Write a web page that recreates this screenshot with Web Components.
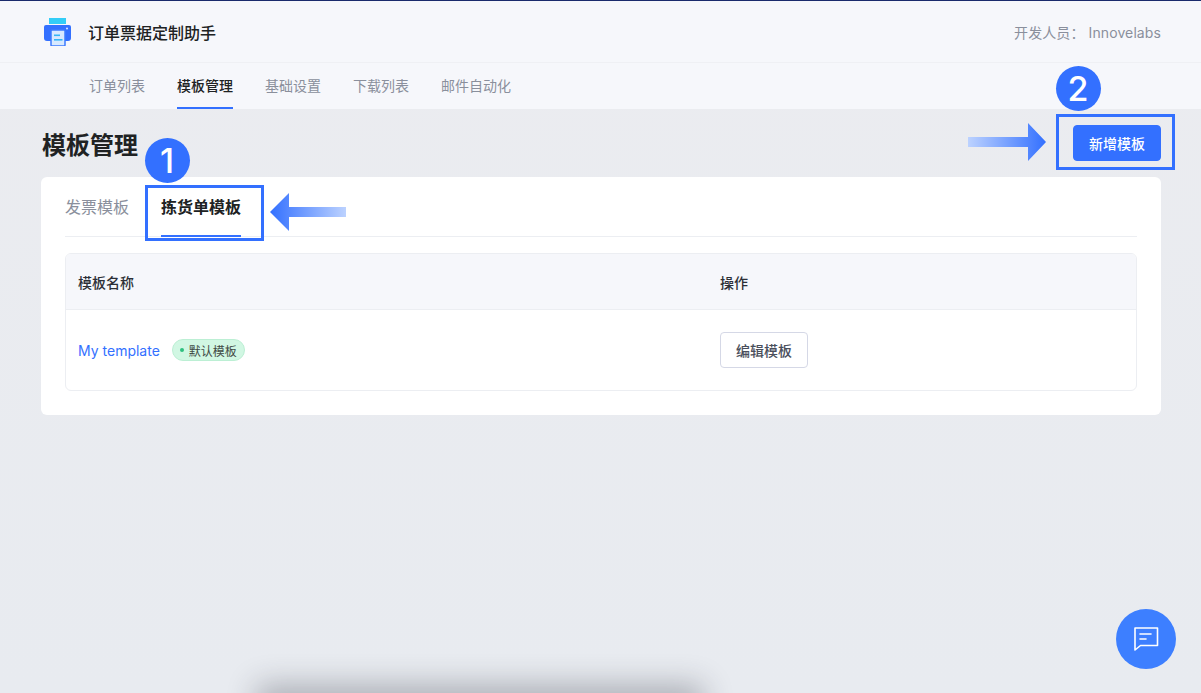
<!DOCTYPE html>
<html lang="zh">
<head>
<meta charset="utf-8">
<title>模板管理</title>
<style>
  html, body { margin: 0; height: 100%; }
  body {
    position: relative;
    overflow: hidden;
    height: 693px;
    background: linear-gradient(#ebecf0, #e8ebf0);
    font-family: Inter, "Noto Sans CJK SC", sans-serif;
    color: #202223;
  }
</style>
</head>
<body>
<app-shell></app-shell>
<call-out num="1" cx="167" cy="160" bx="145" by="185" dir="left" ax="270" ay="193"></call-out>
<call-out num="2" cx="1078" cy="88" bx="1056" by="114" dir="right" ax="968" ay="123"></call-out>
<chat-fab></chat-fab>

<script>
const FONT = 'Inter, "Noto Sans CJK SC", sans-serif';

customElements.define('app-header', class extends HTMLElement {
  constructor() {
    super();
    const root = this.attachShadow({ mode: 'open' });
    root.innerHTML = `
    <style>
      :host {
        display: flex;
        align-items: center;
        justify-content: space-between;
        height: 61px;
        padding: 0 40px 0 44px;
        background: #f6f7fb;
        border-bottom: 1px solid #eff0f4;
      }
      .brand { display: flex; align-items: center; gap: 17px; }
      svg { display: block; width: 27px; height: 28px; }
      h1 { margin: 0; font-size: 16px; font-weight: 500; color: #202223; }
      .dev { font-size: 14px; color: #8a8f9c; letter-spacing: .1px; }
    </style>
    <div class="brand">
      <svg viewBox="0 0 27 28">
        <rect x="5" y="0" width="17" height="6" fill="#33cdf7"/>
        <path d="M2 7h23a2 2 0 0 1 2 2v11a3 3 0 0 1-3 3H3a3 3 0 0 1-3-3V9a2 2 0 0 1 2-2z" fill="#3370ff"/>
        <rect x="7" y="12" width="14" height="16" rx="1" fill="#d7e9ff" stroke="#3d7bff" stroke-width="1.5"/>
        <rect x="10" y="16.5" width="6" height="1.6" fill="#33b5f7"/>
        <rect x="10" y="21" width="8.5" height="1.6" fill="#33b5f7"/>
        <circle cx="23" cy="10.500" r="1" fill="#dce8ff"/>
      </svg>
      <h1>订单票据定制助手</h1>
    </div>
    <div class="dev">开发人员： Innovelabs</div>
    `;
  }
});

customElements.define('app-nav', class extends HTMLElement {
  constructor() {
    super();
    const root = this.attachShadow({ mode: 'open' });
    root.innerHTML = `
    <style>
      :host {
        display: flex;
        gap: 32px;
        height: 46px;
        padding-left: 89px;
        background: #f6f7fb;
      }
      a {
        display: block;
        box-sizing: border-box;
        height: 46px;
        line-height: 46px;
        font-size: 14px;
        color: #8a8f9c;
      }
      a.on { color: #202223; font-weight: 500; border-bottom: 2px solid #3370ff; }
    </style>
    <a>订单列表</a><a class="on">模板管理</a><a>基础设置</a><a>下载列表</a><a>邮件自动化</a>
    `;
  }
});

customElements.define('ui-button', class extends HTMLElement {
  constructor() {
    super();
    const root = this.attachShadow({ mode: 'open' });
    root.innerHTML = `
    <style>
      :host { display: inline-block; }
      button {
        display: block;
        width: 88px;
        height: 36px;
        padding: 0;
        border: 1px solid #d5d8e6;
        border-radius: 4px;
        background: #fff;
        color: #4a4f5c;
        font: 500 14px ${FONT};
      }
      :host([primary]) button { background: #3370ff; border-color: #3370ff; color: #fff; }
    </style>
    <button><slot></slot></button>
    `;
  }
});

customElements.define('status-badge', class extends HTMLElement {
  constructor() {
    super();
    const root = this.attachShadow({ mode: 'open' });
    root.innerHTML = `
    <style>
      :host {
        display: inline-flex;
        align-items: center;
        gap: 5px;
        box-sizing: border-box;
        height: 22px;
        padding: 0 7px;
        border: 1px solid #bcefd4;
        border-radius: 11px;
        background: #d1f7e3;
        color: #3f4a45;
        font-size: 12px;
      }
      i { width: 4px; height: 4px; border-radius: 50%; background: #2fc07f; }
    </style>
    <i></i><slot></slot>
    `;
  }
});

customElements.define('tpl-tabs', class extends HTMLElement {
  constructor() {
    super();
    const root = this.attachShadow({ mode: 'open' });
    root.innerHTML = `
    <style>
      :host {
        display: flex;
        gap: 32px;
        height: 59px;
        border-bottom: 1px solid #eceef2;
      }
      a {
        display: block;
        box-sizing: border-box;
        height: 60px;
        line-height: 60px;
        font-size: 16px;
        color: #8a8f9c;
      }
      a.on { color: #202223; font-weight: 700; border-bottom: 2px solid #3370ff; }
    </style>
    <a>发票模板</a><a class="on">拣货单模板</a>
    `;
  }
});

customElements.define('tpl-table', class extends HTMLElement {
  constructor() {
    super();
    const root = this.attachShadow({ mode: 'open' });
    root.innerHTML = `
    <style>
      :host {
        display: block;
        margin-top: 16px;
        border: 1px solid #eceef2;
        border-radius: 6px;
        overflow: hidden;
      }
      .row { display: grid; grid-template-columns: 642px 1fr; padding-left: 12px; align-items: center; }
      .head {
        height: 55px;
        background: #f6f7fb;
        border-bottom: 1px solid #eceef2;
        font-size: 14px;
        font-weight: 500;
        color: #2c2f36;
      }
      .body { height: 80px; }
      .name { display: flex; align-items: center; gap: 12px; }
      a { color: #3370ff; font-size: 14px; font-weight: 400; }
    </style>
    <div class="row head"><div>模板名称</div><div>操作</div></div>
    <div class="row body">
      <div class="name"><a>My template</a><status-badge>默认模板</status-badge></div>
      <div><ui-button>编辑模板</ui-button></div>
    </div>
    `;
  }
});

customElements.define('app-shell', class extends HTMLElement {
  constructor() {
    super();
    const root = this.attachShadow({ mode: 'open' });
    root.innerHTML = `
    <style>
      :host { display: block; height: 693px; border-top: 1px solid #1a2a6c; box-sizing: border-box; }
      main { padding: 16px 40px 0 41px; }
      .title { display: flex; align-items: center; justify-content: space-between; height: 36px; margin-bottom: 16px; }
      h2 { margin: 0 0 0 1px; font-size: 24px; font-weight: 700; color: #202223; }
      .card {
        box-sizing: border-box;
        height: 238px;
        padding: 0 24px;
        background: #fff;
        border-radius: 6px;
      }
    </style>
    <app-header></app-header>
    <app-nav></app-nav>
    <main>
      <div class="title"><h2>模板管理</h2><ui-button primary>新增模板</ui-button></div>
      <div class="card">
        <tpl-tabs></tpl-tabs>
        <tpl-table></tpl-table>
      </div>
    </main>
    `;
  }
});

// numbered marker, frame and arrow painted over the page
customElements.define('call-out', class extends HTMLElement {
  constructor() {
    super();
    const root = this.attachShadow({ mode: 'open' });
    const g = this.getAttribute('num');
    const left = this.getAttribute('dir') === 'left';
    const shape = left
      ? 'M0 19 L19 0 V14 H76 V24 H19 V38 Z'
      : 'M0 14 H60 V0 L78 19 L60 38 V24 H0 Z';
    const stops = left
      ? '<stop offset="0" stop-color="#3370ff"/><stop offset="1" stop-color="#bcd2ff"/>'
      : '<stop offset="0" stop-color="#bcd2ff"/><stop offset="1" stop-color="#3370ff"/>';
    root.innerHTML = `
    <style>
      :host { display: contents; }
      .num {
        position: absolute;
        width: 45px;
        height: 45px;
        border-radius: 50%;
        background: #3370ff;
        color: #fff;
        font: 500 34px/45px Inter, sans-serif;
        text-align: center;
      }
      .box {
        position: absolute;
        box-sizing: border-box;
        width: 119px;
        height: 56px;
        border: 3px solid #3370ff;
      }
      svg { position: absolute; width: 78px; height: 38px; }
    </style>
    <div class="num" style="left:${this.getAttribute('cx') - 22.5}px;top:${this.getAttribute('cy') - 22.5}px">${g}</div>
    <div class="box" style="left:${this.getAttribute('bx')}px;top:${this.getAttribute('by')}px"></div>
    <svg viewBox="0 0 78 38" style="left:${this.getAttribute('ax')}px;top:${this.getAttribute('ay')}px">
      <defs><linearGradient id="fade">${stops}</linearGradient></defs>
      <path d="${shape}" fill="url(#fade)"/>
    </svg>
    `;
  }
});

customElements.define('chat-fab', class extends HTMLElement {
  constructor() {
    super();
    const root = this.attachShadow({ mode: 'open' });
    root.innerHTML = `
    <style>
      :host {
        position: absolute;
        left: 1116px;
        top: 609px;
        display: flex;
        align-items: center;
        justify-content: center;
        width: 60px;
        height: 60px;
        border-radius: 50%;
        background: #3d7fff;
      }
      svg { width: 28px; height: 28px; }
    </style>
    <svg viewBox="0 0 28 28" fill="none" stroke="#fff" stroke-width="1.600">
      <path d="M3 3H25.500V20.500H8.500L3 25V3Z" stroke-linejoin="round"/>
      <path d="M8 9H19M8 14H14" stroke-linecap="round"/>
    </svg>
    `;
  }
});
</script>
<div style="position:absolute;left:265px;top:693px;width:430px;height:20px;box-shadow:0 0 30px 8px rgba(40,45,55,.32)"></div>
</body>
</html>
